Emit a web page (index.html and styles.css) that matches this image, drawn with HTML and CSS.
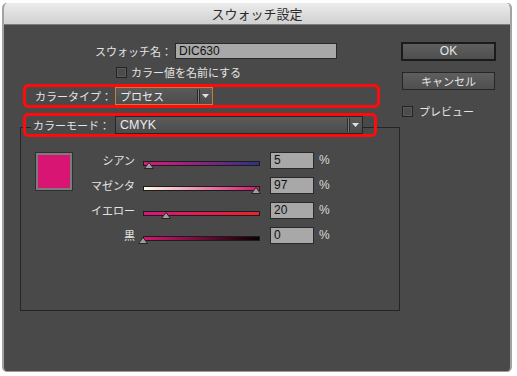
FILE: index.html
```html
<!DOCTYPE html>
<html lang="ja">
<head>
<meta charset="utf-8">
<title>スウォッチ設定</title>
<link rel="stylesheet" href="styles.css">
</head>
<body>
<div class="window">
  <div class="titlebar">スウォッチ設定</div>
  <div class="body">
    <div class="main">
      <div class="name-row">
        <span class="name-label">スウォッチ名：</span>
        <div class="field name-input">DIC630</div>
      </div>
      <div class="check-row name-check">
        <span class="checkbox"></span>
        <span class="check-text">カラー値を名前にする</span>
      </div>
      <div class="hl type-row">
        <span class="type-label">カラータイプ：</span>
        <div class="select select-focus type-select">
          <span class="select-value jp">プロセス</span>
          <span class="select-arrow"><svg width="7" height="4" viewBox="0 0 7 4"><path d="M0 0H7L3.5 4Z" fill="#e0e0e0"/></svg></span>
        </div>
      </div>
      <div class="hl mode-row">
        <span class="mode-label">カラーモード：</span>
        <div class="select mode-select">
          <span class="select-value latin">CMYK</span>
          <span class="select-arrow"><svg width="7" height="4" viewBox="0 0 7 4"><path d="M0 0H7L3.5 4Z" fill="#e0e0e0"/></svg></span>
        </div>
      </div>
      <div class="group">
        <div class="swatch"></div>
        <div class="sliders">
          <div class="slider-row">
            <span class="s-label">シアン</span>
            <div class="track-wrap">
              <div class="track track-c"></div>
              <svg class="thumb" style="left:5%" width="10" height="7" viewBox="0 0 10 7"><path d="M5 0.5L9.5 6.5H0.5Z" fill="#9e9e9e" stroke="#262626"/></svg>
            </div>
            <div class="field s-input">5</div>
            <span class="pct">%</span>
          </div>
          <div class="slider-row">
            <span class="s-label">マゼンタ</span>
            <div class="track-wrap">
              <div class="track track-m"></div>
              <svg class="thumb" style="left:97%" width="10" height="7" viewBox="0 0 10 7"><path d="M5 0.5L9.5 6.5H0.5Z" fill="#9e9e9e" stroke="#262626"/></svg>
            </div>
            <div class="field s-input">97</div>
            <span class="pct">%</span>
          </div>
          <div class="slider-row">
            <span class="s-label">イエロー</span>
            <div class="track-wrap">
              <div class="track track-y"></div>
              <svg class="thumb" style="left:20%" width="10" height="7" viewBox="0 0 10 7"><path d="M5 0.5L9.5 6.5H0.5Z" fill="#9e9e9e" stroke="#262626"/></svg>
            </div>
            <div class="field s-input">20</div>
            <span class="pct">%</span>
          </div>
          <div class="slider-row">
            <span class="s-label">黒</span>
            <div class="track-wrap">
              <div class="track track-k"></div>
              <svg class="thumb" style="left:0%" width="10" height="7" viewBox="0 0 10 7"><path d="M5 0.5L9.5 6.5H0.5Z" fill="#9e9e9e" stroke="#262626"/></svg>
            </div>
            <div class="field s-input">0</div>
            <span class="pct">%</span>
          </div>
        </div>
      </div>
    </div>
    <div class="side">
      <div class="btn btn-default">OK</div>
      <div class="btn btn-cancel">キャンセル</div>
      <div class="check-row preview">
        <span class="checkbox"></span>
        <span class="check-text">プレビュー</span>
      </div>
    </div>
  </div>
</div>
</body>
</html>
```
FILE: styles.css
```css
html, body {
  margin: 0;
  padding: 0;
}
body {
  background: #ffffff;
  width: 517px;
  height: 376px;
  overflow: hidden;
  font-family: "Noto Sans CJK JP", "Noto Sans", sans-serif;
  font-size: 11px;
  color: #e4e4e4;
}
.window {
  margin: 3px 0 0 2px;
  width: 510px;
  height: 369px;
  box-sizing: border-box;
  background: #494949;
  border-left: 2px solid #a2a2a2;
  border-right: 2px solid #a2a2a2;
  border-bottom: 1px solid #9a9a9a;
  border-radius: 5px 5px 5px 5px;
  overflow: hidden;
  display: flex;
  flex-direction: column;
}
.titlebar {
  height: 22px;
  flex: none;
  box-sizing: border-box;
  background: linear-gradient(#ececec, #d0d0d0);
  border-bottom: 1px solid #7c7c7c;
  text-align: center;
  font-size: 13px;
  line-height: 21px;
  color: #2b2b2b;
  margin: 0 -2px;
  border-radius: 5px 5px 0 0;
}
.body {
  display: flex;
  padding-top: 17px;
}
.main {
  width: 397px;
  flex: none;
}
.side {
  width: 95px;
  flex: none;
  display: flex;
  flex-direction: column;
}

/* name row */
.name-row {
  display: flex;
  align-items: center;
  margin-top: 1px;
  height: 16px;
}
.name-label {
  width: 168px;
  text-align: right;
  line-height: 16px;
}
.field {
  box-sizing: border-box;
  background: #a8a8a8;
  border: 1px solid #292929;
  font-family: "Liberation Sans", Arial, sans-serif;
  font-size: 12px;
  color: #111111;
  padding-left: 3px;
}
.name-input {
  margin-left: 3px;
  width: 162px;
  height: 16px;
  line-height: 14px;
}

/* checkboxes */
.check-row {
  display: flex;
  align-items: center;
  height: 12px;
}
.name-check {
  margin-top: 7px;
  padding-left: 112px;
}
.checkbox {
  width: 11px;
  height: 11px;
  box-sizing: border-box;
  border: 1px solid #232323;
  background: #4c4c4c;
  box-shadow: inset 0 0 0 1px #5a5a5a;
  flex: none;
}
.name-check .check-text {
  margin-left: 4px;
  line-height: 12px;
}

/* highlighted rows */
.hl {
  margin-left: 19px;
  border: 3px solid #ff0b0b;
  border-radius: 5px;
  box-sizing: border-box;
  height: 24px;
  display: flex;
  align-items: center;
}
.type-row {
  margin-top: 6px;
  width: 357px;
}
.type-label {
  width: 89px;
  box-sizing: border-box;
  padding-left: 9px;
  line-height: 16px;
}
.mode-row {
  margin-top: 5px;
  width: 354px;
  position: relative;
  z-index: 1;
}
.mode-label {
  margin-left: 5px;
  width: 84px;
  box-sizing: border-box;
  padding-left: 2px;
  background: #494949;
  line-height: 16px;
}
.select {
  height: 18px;
  box-sizing: border-box;
  border: 1px solid #262626;
  background: linear-gradient(#5b5b5b, #4c4c4c);
  display: flex;
  align-items: center;
}
.select-focus {
  border-color: #cc7c30;
}
.type-select {
  width: 98px;
}
.mode-select {
  width: 248px;
}
.select-value {
  flex: 1;
  padding-left: 4px;
  color: #ececec;
}
.select-value.latin {
  font-family: "Liberation Sans", Arial, sans-serif;
  font-size: 12.5px;
}
.select-arrow {
  width: 12px;
  height: 14px;
  border-left: 1px solid #7a7a7a;
  box-shadow: -1px 0 0 #2c2c2c, inset 1px 0 0 #2e2e2e;
  display: flex;
  align-items: center;
  justify-content: center;
  margin-right: 1px;
}

/* group box */
.group {
  margin-top: -10px;
  margin-left: 16px;
  width: 380px;
  height: 184px;
  box-sizing: border-box;
  border: 1px solid #252525;
  display: flex;
  align-items: flex-start;
  padding: 24px 0 0 14px;
}
.swatch {
  width: 38px;
  height: 39px;
  box-sizing: border-box;
  background: #d81572;
  border: 1px solid #303030;
  box-shadow: inset 0 0 0 2px #7c7c7c;
  flex: none;
}
.sliders {
  display: flex;
  flex-direction: column;
}
.slider-row {
  display: flex;
  align-items: flex-start;
  height: 25px;
}
.s-label {
  width: 62px;
  text-align: right;
  line-height: 17px;
}
.track-wrap {
  margin-left: 8px;
  width: 117px;
  height: 17px;
  position: relative;
}
.track {
  margin-top: 9px;
  height: 5px;
  box-sizing: border-box;
  border: 1px solid #1c1c1c;
}
.track-c { background: linear-gradient(to right, #e0177a, #2f3184); }
.track-m { background: linear-gradient(to right, #fffbe8, #d81572); }
.track-y { background: linear-gradient(to right, #d8157a, #ea2328); }
.track-k { background: linear-gradient(to right, #d81572, #0c0000); }
.thumb {
  position: absolute;
  top: 10px;
  margin-left: -5px;
  display: block;
}
.s-input {
  margin-left: 10px;
  width: 44px;
  height: 17px;
  line-height: 15px;
}
.pct {
  margin-left: 5px;
  font-family: "Liberation Sans", Arial, sans-serif;
  font-size: 12px;
  line-height: 17px;
  color: #dcdcdc;
}

/* buttons */
.btn {
  box-sizing: border-box;
  background: linear-gradient(#5e5e5e, #4f4f4f);
  color: #e6e6e6;
  text-align: center;
}
.btn-default {
  width: 95px;
  height: 19px;
  border: 2px solid #1b1b1b;
  font-family: "Liberation Sans", Arial, sans-serif;
  font-size: 12px;
  line-height: 15px;
}
.btn-cancel {
  margin-top: 11px;
  margin-left: 1px;
  width: 93px;
  height: 18px;
  border: 1px solid #262626;
  line-height: 16px;
}
.preview {
  margin-top: 15px;
  margin-left: 1px;
}
.preview .check-text {
  margin-left: 6px;
  line-height: 12px;
}
```
